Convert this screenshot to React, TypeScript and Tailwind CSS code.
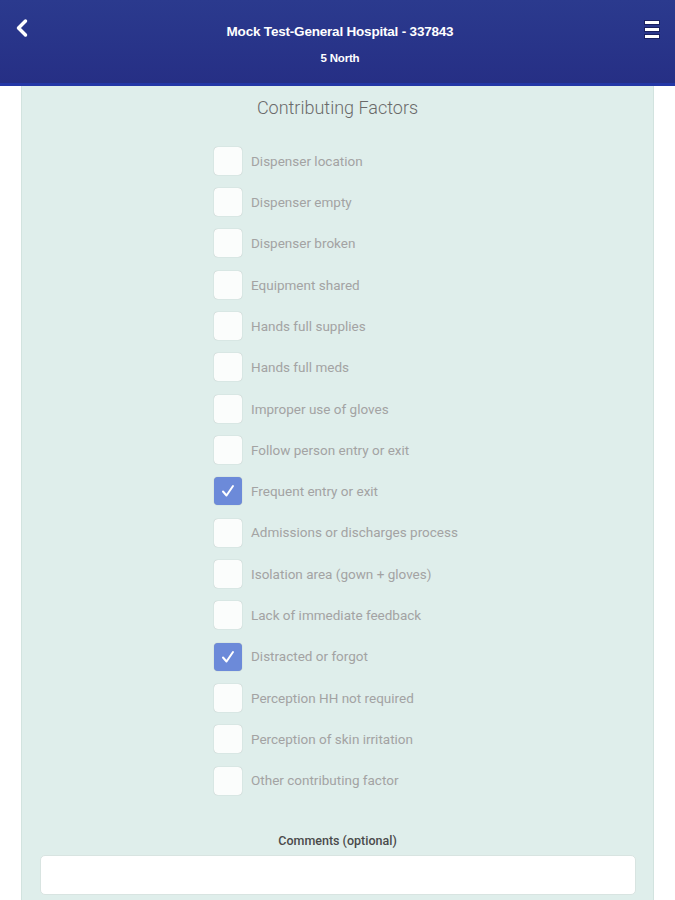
import { ChevronLeft } from 'lucide-react';

const factors = [
  { label: 'Dispenser location', checked: false },
  { label: 'Dispenser empty', checked: false },
  { label: 'Dispenser broken', checked: false },
  { label: 'Equipment shared', checked: false },
  { label: 'Hands full supplies', checked: false },
  { label: 'Hands full meds', checked: false },
  { label: 'Improper use of gloves', checked: false },
  { label: 'Follow person entry or exit', checked: false },
  { label: 'Frequent entry or exit', checked: true },
  { label: 'Admissions or discharges process', checked: false },
  { label: 'Isolation area (gown + gloves)', checked: false },
  { label: 'Lack of immediate feedback', checked: false },
  { label: 'Distracted or forgot', checked: true },
  { label: 'Perception HH not required', checked: false },
  { label: 'Perception of skin irritation', checked: false },
  { label: 'Other contributing factor', checked: false },
];

const Checkbox = ({ checked }: { checked: boolean }) => (
  <div
    className={
      checked
        ? 'w-[28px] h-[28px] rounded-[4px] bg-[#6c8ad9] flex items-center justify-center shadow-[0_0_1px_rgba(0,0,0,0.3)]'
        : 'w-[28px] h-[28px] rounded-[4px] bg-[#fbfdfc] shadow-[0_0_1px_rgba(0,0,0,0.3)]'
    }
  >
    {checked && (
      <svg width="16" height="16" viewBox="0 0 16 16" fill="none">
        <path d="M3 8.5 L6.5 12.5 L13 3" stroke="#fff" strokeWidth="2" strokeLinecap="round" strokeLinejoin="round" />
      </svg>
    )}
  </div>
);

export default function App() {
  return (
    <div className="w-[675px] h-[900px] overflow-hidden bg-white font-['Roboto',sans-serif]">
      {/* Header */}
      <header className="h-[86px] bg-gradient-to-b from-[#2b3a8e] to-[#262f85] border-b-[3px] border-[#2437a6] flex items-start justify-between pl-[8px] pr-[15px]">
        <div className="pt-[14px] text-white">
          <ChevronLeft size={28} strokeWidth={3} />
        </div>
        <div className="flex flex-col items-center pt-[23px] text-white font-['Liberation_Sans',sans-serif] font-bold tracking-[-0.2px]">
          <p className="text-[13.5px] leading-[18px]">Mock Test-General Hospital - 337843</p>
          <p className="text-[11.5px] leading-[16px] mt-[9px]">5 North</p>
        </div>
        <div className="pt-[20px] flex flex-col gap-[2px]">
          <span className="block w-[16px] h-[5px] bg-white border border-[#1a2060]" />
          <span className="block w-[16px] h-[5px] bg-white border border-[#1a2060]" />
          <span className="block w-[16px] h-[5px] bg-white border border-[#1a2060]" />
        </div>
      </header>

      {/* Panel */}
      <main className="mx-[21px] bg-[#dfeeeb] border-x border-[#d2e3df] h-[814px] flex flex-col items-center">
        <h1 className="pt-[10px] text-[18px] leading-[24px] font-light text-[#6a6a6a]">Contributing Factors</h1>
        <div className="mt-[20px] self-start ml-[192px] flex flex-col">
          {factors.map((f) => (
            <div key={f.label} className="h-[41.33px] flex items-center gap-[9px]">
              <Checkbox checked={f.checked} />
              <span className="text-[13.5px] text-[#a3a3a3]">{f.label}</span>
            </div>
          ))}
        </div>
        <p className="mt-[31px] text-[12.5px] font-medium text-[#4a4a4a]">Comments (optional)</p>
        <div className="mt-[4px] w-[596px] h-[40px] bg-white rounded-[5px] border border-[#d8e4e1]" />
      </main>
    </div>
  );
}
